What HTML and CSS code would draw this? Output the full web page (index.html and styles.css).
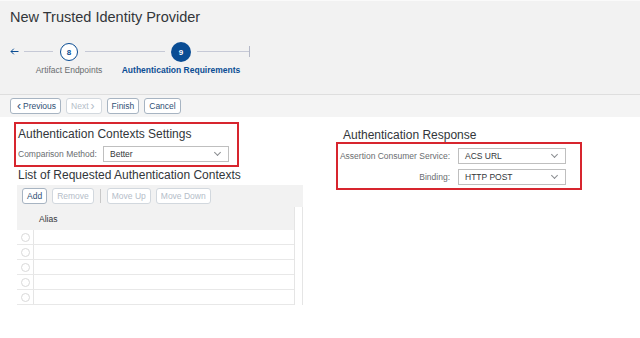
FILE: index.html
```html
<!DOCTYPE html>
<html>
<head>
<meta charset="utf-8">
<link rel="stylesheet" href="styles.css">
</head>
<body>
<div class="header">
  <div class="title">New Trusted Identity Provider</div>
  <div class="progress">
    <svg class="back" width="9" height="7" viewBox="0 0 9 7"><path d="M8.5 3.5H1M3.8 0.7L1 3.5l2.8 2.8" fill="none" stroke="#0a4d94" stroke-width="1"/></svg>
    <span class="line l1"></span>
    <div class="step s8">
      <span class="circle done">8</span>
      <span class="label">Artifact Endpoints</span>
    </div>
    <span class="line l2"></span>
    <div class="step s9">
      <span class="circle current">9</span>
      <span class="label active">Authentication Requirements</span>
    </div>
    <span class="line l3"></span>
    <span class="tick"></span>
  </div>
</div>
<div class="toolbar">
  <button class="btn"><span class="chev">&#8249;</span> Previous</button>
  <button class="btn disabled">Next <span class="chev">&#8250;</span></button>
  <button class="btn">Finish</button>
  <button class="btn">Cancel</button>
</div>
<div class="content">
  <div class="left">
    <div class="hl hl1">
      <div class="heading">Authentication Contexts Settings</div>
      <div class="field">
        <span class="flabel">Comparison Method:</span>
        <div class="select sel-cmp"><span>Better</span><span class="dd"></span></div>
      </div>
    </div>
    <div class="heading list-title">List of Requested Authentication Contexts</div>
    <div class="table">
      <div class="ttools">
        <button class="btn">Add</button>
        <button class="btn disabled">Remove</button>
        <span class="sep"></span>
        <button class="btn disabled">Move Up</button>
        <button class="btn disabled">Move Down</button>
      </div>
      <div class="tgrid">
        <div class="tmain">
          <div class="trow thead"><span class="tsel"></span><span class="tcell">Alias</span></div>
          <div class="trow"><span class="tsel"><i class="radio"></i></span><span class="tcell"></span></div>
          <div class="trow"><span class="tsel"><i class="radio"></i></span><span class="tcell"></span></div>
          <div class="trow"><span class="tsel"><i class="radio"></i></span><span class="tcell"></span></div>
          <div class="trow"><span class="tsel"><i class="radio"></i></span><span class="tcell"></span></div>
          <div class="trow"><span class="tsel"><i class="radio"></i></span><span class="tcell"></span></div>
        </div>
        <div class="tscroll"></div>
      </div>
    </div>
  </div>
  <div class="right">
    <div class="heading">Authentication Response</div>
    <div class="hl hl2">
      <div class="field rfield">
        <span class="flabel rlabel">Assertion Consumer Service:</span>
        <div class="select sel-r"><span>ACS URL</span><span class="dd"></span></div>
      </div>
      <div class="field rfield">
        <span class="flabel rlabel">Binding:</span>
        <div class="select sel-r"><span>HTTP POST</span><span class="dd"></span></div>
      </div>
    </div>
  </div>
</div>
</body>
</html>
```
FILE: styles.css
```css
* { box-sizing: border-box; }
body {
  margin: 0;
  font-family: "Liberation Sans", Arial, sans-serif;
  background: #ffffff;
  color: #32363a;
}
.header {
  background: #f2f2f2;
  height: 95px;
  padding: 8px 0 0 10px;
  border-top: 1px solid #fafafa;
  border-bottom: 1px solid #dedede;
}
.title {
  font-size: 14.5px;
  color: #32363a;
  line-height: 17px;
}
.progress {
  display: flex;
  align-items: flex-start;
  margin-top: 17px;
  height: 40px;
}
.back {
  margin-top: 5px;
  flex-shrink: 0;
}
.line {
  height: 1px;
  background: #c6c9d6;
  margin-top: 8px;
  flex-shrink: 0;
}
.l1 { width: 29px; margin-left: 5px; margin-right: 7px; }
.l2 { width: 80px; margin-left: 7px; margin-right: 6px; }
.l3 { width: 52px; margin-left: 6px; }
.tick {
  width: 1px;
  height: 11px;
  background: #b5b9c8;
  margin-top: 3px;
  flex-shrink: 0;
}
.step {
  display: flex;
  flex-direction: column;
  align-items: center;
  flex-shrink: 0;
}
.s8 { width: 18px; }
.s9 { width: 20px; }
.circle {
  display: flex;
  align-items: center;
  justify-content: center;
  border-radius: 50%;
  font-size: 8px;
  font-weight: bold;
  flex-shrink: 0;
}
.circle.done {
  width: 18px;
  height: 18px;
  border: 1px solid #0a4d94;
  background: #fff;
  color: #0a4d94;
}
.circle.current {
  width: 20px;
  height: 20px;
  margin-top: -1px;
  background: #0a4d94;
  color: #fff;
}
.label {
  white-space: nowrap;
  font-size: 8.5px;
  color: #6a6d70;
  margin-top: 4px;
}
.label.active {
  color: #0a4d94;
  font-weight: bold;
  margin-top: 3px;
}
.toolbar {
  background: #f4f4f4;
  height: 22px;
  padding: 3px 0 0 10px;
  display: flex;
  gap: 5px;
  align-items: flex-start;
}
.btn {
  font-family: "Liberation Sans", Arial, sans-serif;
  font-size: 8.5px;
  height: 16px;
  padding: 0 4px;
  border: 1px solid #a7b4c2;
  border-radius: 3px;
  background: #fff;
  color: #2f4f75;
  line-height: 14px;
  display: flex;
  align-items: center;
}
.btn.disabled {
  color: #b4bdc8;
  border-color: #d2d8de;
}
.chev { font-size: 12px; margin: 0 2px; line-height: 12px; }
.content {
  display: flex;
  padding-top: 5px;
}
.left {
  width: 303px;
  padding-left: 14px;
  flex-shrink: 0;
}
.hl {
  border: 2px solid #d7252e;
}
.hl1 {
  width: 225px;
  padding: 3px 0 3px 2px;
}
.heading {
  font-size: 12px;
  line-height: 15px;
  color: #32363a;
  white-space: nowrap;
}
.field {
  display: flex;
  align-items: center;
  margin-top: 4px;
}
.flabel {
  font-size: 8.5px;
  color: #6a6d70;
  width: 85px;
  white-space: nowrap;
  flex-shrink: 0;
}
.select {
  display: flex;
  align-items: center;
  justify-content: space-between;
  height: 16px;
  border: 1px solid #bfbfbf;
  background: #fff;
  font-size: 8.5px;
  color: #32363a;
  padding: 0 8px 0 6px;
  flex-shrink: 0;
}
.sel-cmp { width: 126px; }
.dd {
  width: 5px;
  height: 5px;
  border-right: 1px solid #8a8d90;
  border-bottom: 1px solid #8a8d90;
  transform: rotate(45deg);
  margin-top: -3px;
}
.list-title { margin-left: 4px; margin-top: 1px; }
.table {
  margin-left: 3px;
  margin-top: 2px;
  width: 286px;
}
.ttools {
  background: #f2f2f2;
  height: 22px;
  display: flex;
  align-items: center;
  gap: 5px;
  padding-left: 5px;
}
.sep {
  width: 1px;
  height: 14px;
  background: #c8c8c8;
  margin: 0 1px;
}
.tgrid {
  display: flex;
}
.tmain { width: 277px; }
.tscroll {
  flex: 1;
  border-left: 1px solid #e5e5e5;
  border-right: 1px solid #e5e5e5;
  height: 98px;
}
.trow {
  display: flex;
  height: 15px;
  border-bottom: 1px solid #e8e8e8;
}
.trow.thead {
  height: 23px;
  background: #f2f2f2;
  border-bottom: none;
}
.tsel {
  width: 17px;
  border-right: 1px solid #e5e5e5;
  display: flex;
  align-items: center;
  justify-content: center;
}
.thead .tsel { border-right: none; }
.tcell {
  flex: 1;
  font-size: 8.5px;
  color: #32363a;
  padding-left: 5px;
  display: flex;
  align-items: center;
}
.radio {
  width: 9px;
  height: 9px;
  border: 1px solid #d9d9d9;
  border-radius: 50%;
  background: #fff;
}
.right {
  padding-left: 33px;
  padding-top: 6px;
}
.right .heading { padding-left: 7px; }
.hl2 {
  width: 246px;
  margin-top: -1px;
  padding: 4px 0 3px 0;
}
.rfield { margin-top: 0; margin-bottom: 5px; }
.rfield:last-child { margin-bottom: 0; }
.rlabel {
  width: 120px;
  text-align: right;
  padding-right: 8px;
}
.sel-r { width: 108px; }
```
